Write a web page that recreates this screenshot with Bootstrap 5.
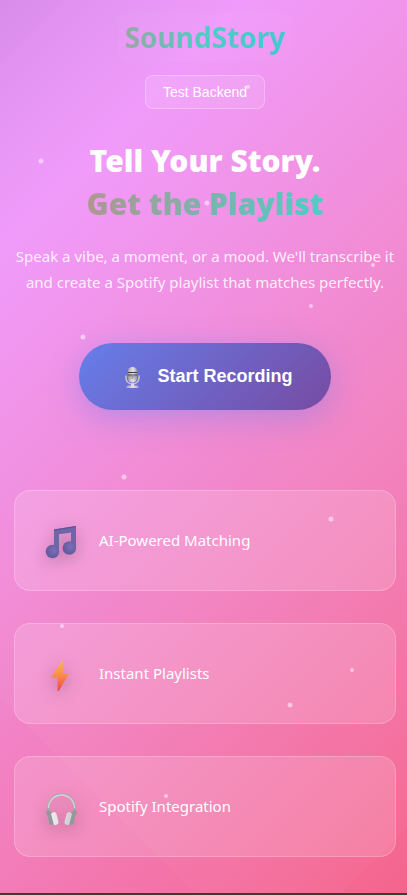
<!DOCTYPE html>
<html lang="en">
<head>
<meta charset="utf-8">
<meta name="viewport" content="width=device-width, initial-scale=1">
<title>SoundStory</title>
<link rel="stylesheet" href="https://cdn.jsdelivr.net/npm/bootstrap@5.3.0/dist/css/bootstrap.min.css">
<style>
body { background: #3c3b30; font-family: "Noto Sans", "Open Sans", sans-serif; }
.story-page {
  padding: 12px 11px 36px 14px;
  background:
    linear-gradient(45deg, rgba(240,50,150,.05) 15%, transparent 15%),
    linear-gradient(135deg, rgba(160,90,200,.04) 5%, transparent 5%, transparent 95%, rgba(230,50,100,.06) 95%),
    linear-gradient(135deg, #db8fec 0%, #f09bfb 19%, #f283bf 64%, #f5688e 100%);
}
.brand { padding: 0 8px; line-height: 50px; font-size: 28px; border-radius: 12px; background: rgba(255,255,255,.025); }
.brand span { background: linear-gradient(90deg, #96a8a0, #4ecdc4 50%, #45c7d1); -webkit-background-clip: text; background-clip: text; color: transparent; }
.test-btn { margin-top: 13px; height: 34px; padding: 0 17px; border: 1px solid rgba(255,255,255,.25); border-radius: 8px; background: rgba(255,255,255,.1); color: #fff; font: 14px "Liberation Sans", Arial, sans-serif; }
.headline { margin: 30px 0 0; font-size: 30px; line-height: 43px; font-weight: 900; color: #fff; }
.headline span { background: linear-gradient(100deg, #b0968f, #4ecdc4 95%); -webkit-background-clip: text; background-clip: text; color: transparent; }
.intro { margin: 18px 0 0; font-size: 15px; line-height: 26px; color: rgba(255,255,255,.87); }
.record-btn { margin: 48px 0 80px; height: 67px; padding: 0 38px 0 40px; gap: 12px; border: 0; border-radius: 34px; color: #fff; font: bold 18px "Liberation Sans", Arial, sans-serif; background: linear-gradient(135deg, #667eea, #764ba2); box-shadow: 0 8px 32px rgba(102,126,234,.4); }
.feature { height: 101px; padding: 0 30px; gap: 20px; border: 1px solid rgba(255,255,255,.22); border-radius: 16px; background: rgba(255,255,255,.15); color: #fff; font-size: 15px; }
.feature-list { gap: 32px; }
.feature svg { filter: drop-shadow(0 4px 8px rgba(0,0,0,.25)); }
.sparks { position: absolute; inset: 0; width: 100%; height: 100%; pointer-events: none; }
</style>
<script src="https://cdn.jsdelivr.net/npm/bootstrap@5.3.0/dist/js/bootstrap.bundle.min.js"></script>
</head>
<body>
<main class="story-page position-relative d-flex flex-column align-items-center">
  <div class="brand fw-bold"><span>SoundStory</span></div>
  <button type="button" class="test-btn">Test Backend</button>
  <h1 class="headline text-center">Tell Your Story.<br><span>Get the Playlist</span></h1>
  <p class="intro text-center">Speak a vibe, a moment, or a mood. We'll transcribe it and create a Spotify playlist that matches perfectly.</p>
  <button type="button" class="record-btn d-flex align-items-center">
    <svg width="26" height="26" viewBox="0 0 26 26" aria-hidden="true">
      <defs><linearGradient id="mic" x2="1"><stop stop-color="#a9a5ae"/><stop offset=".55" stop-color="#e6e2e8"/><stop offset="1" stop-color="#a9a5b2"/></linearGradient></defs>
      <path d="M7 11.500V14a6.500 6 0 0 0 13 0v-2.500" fill="none" stroke="#c4bfca" stroke-width="1.600"/>
      <rect x="9" y="3" width="9" height="15.500" rx="4.500" fill="url(#mic)"/>
      <path d="M9 8.500h9M9 11h9" stroke="#3f3b4d" stroke-width="1.200"/>
      <path d="M9 14h9M9 12.500h9M13.500 12v3" stroke="#8c8793" stroke-width=".6"/>
      <path d="M12 19.500h3V21.500h2.500a2 2 0 0 1 2 2.500h-12a2 2 0 0 1 2-2.500H12z" fill="url(#mic)"/>
    </svg>
    <span>Start Recording</span>
  </button>
  <ul class="feature-list list-unstyled w-100 mb-0 d-flex flex-column">
    <li class="feature d-flex align-items-center">
      <svg width="34" height="40" viewBox="0 -1 34 40" aria-hidden="true">
        <defs><radialGradient id="note" cx=".6" cy=".4" r=".6"><stop stop-color="#7e6dbb"/><stop offset="1" stop-color="#62599a"/></radialGradient></defs>
        <path d="M9 7.500 31 4v22h-5V10.500L14 12.300V29H9z" fill="#7065a7"/>
        <path d="M9 8 31 4.500" stroke="#5a5190" stroke-width="1"/>
        <circle cx="7.500" cy="29.500" r="6.800" fill="url(#note)"/><circle cx="24.300" cy="26" r="6.800" fill="url(#note)"/>
      </svg>
      <span>AI-Powered Matching</span>
    </li>
    <li class="feature d-flex align-items-center">
      <svg width="34" height="40" viewBox="0 -2 34 40" aria-hidden="true">
        <defs><linearGradient id="bolt" x2="0" y2="1"><stop stop-color="#fcb94d"/><stop offset=".5" stop-color="#fa8c49"/><stop offset="1" stop-color="#f0454c"/></linearGradient></defs>
        <path d="M17.500 4 6 21.500h6.500V35h1.300L24 17.500h-6z" fill="url(#bolt)"/>
      </svg>
      <span>Instant Playlists</span>
    </li>
    <li class="feature d-flex align-items-center">
      <svg width="34" height="40" viewBox="0 -3 34 40" aria-hidden="true">
        <defs><linearGradient id="cup" x2="1"><stop stop-color="#eee"/><stop offset="1" stop-color="#cfccd2"/></linearGradient></defs>
        <path d="M3.500 23V17a13 12.500 0 0 1 26 0v6" fill="none" stroke="#aaa7ae" stroke-width="2.600"/>
        <path d="M3.500 18a13 13 0 0 1 26 0" fill="none" stroke="#d5d3d8" stroke-width="1.300"/>
        <path d="M1 23q0-3 3-3l3 3 2 12-4.500-.5q-1-4-1.500-8zM32 23q0-3-3-3l-3 3-2 12 4.500-.5q1-4 1.500-8z" fill="#98969d"/>
        <path d="M6 24q3.500-4 5.500 0l2 8q0 3.500-4.500 3zM27 24q-3.500-4-5.500 0l-2 8q0 3.500 4.500 3z" fill="url(#cup)"/>
      </svg>
      <span>Spotify Integration</span>
    </li>
  </ul>
  <svg class="sparks" aria-hidden="true" fill="#fff" fill-opacity=".5">
    <circle cx="41" cy="161" r="2.500"/><circle cx="207" cy="203" r="2.500"/><circle cx="248" cy="87" r="2"/>
    <circle cx="373" cy="265" r="2"/><circle cx="311" cy="306" r="2"/><circle cx="83" cy="337" r="2.500"/>
    <circle cx="124" cy="477" r="2.500"/><circle cx="331" cy="519" r="2.500"/><circle cx="62" cy="626" r="2"/>
    <circle cx="352" cy="670" r="2"/><circle cx="290" cy="705" r="2.500"/><circle cx="166" cy="796" r="2"/>
  </svg>
</main>
</body>
</html>
